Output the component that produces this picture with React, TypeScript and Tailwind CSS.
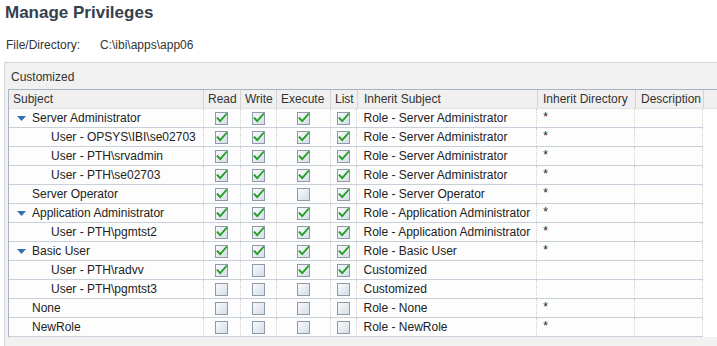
import React from 'react';

type Row = {
  subject: string;
  level: 0 | 1;
  expand?: boolean;
  perms: [boolean, boolean, boolean, boolean];
  inherit: string;
  dir: string;
};

const rows: Row[] = [
  { subject: 'Server Administrator', level: 0, expand: true, perms: [true, true, true, true], inherit: 'Role - Server Administrator', dir: '*' },
  { subject: 'User - OPSYS\\IBI\\se02703', level: 1, perms: [true, true, true, true], inherit: 'Role - Server Administrator', dir: '*' },
  { subject: 'User - PTH\\srvadmin', level: 1, perms: [true, true, true, true], inherit: 'Role - Server Administrator', dir: '*' },
  { subject: 'User - PTH\\se02703', level: 1, perms: [true, true, true, true], inherit: 'Role - Server Administrator', dir: '*' },
  { subject: 'Server Operator', level: 0, perms: [true, true, false, true], inherit: 'Role - Server Operator', dir: '*' },
  { subject: 'Application Administrator', level: 0, expand: true, perms: [true, true, true, true], inherit: 'Role - Application Administrator', dir: '*' },
  { subject: 'User - PTH\\pgmtst2', level: 1, perms: [true, true, true, true], inherit: 'Role - Application Administrator', dir: '*' },
  { subject: 'Basic User', level: 0, expand: true, perms: [true, true, true, true], inherit: 'Role - Basic User', dir: '*' },
  { subject: 'User - PTH\\radvv', level: 1, perms: [true, false, true, true], inherit: 'Customized', dir: '' },
  { subject: 'User - PTH\\pgmtst3', level: 1, perms: [false, false, false, false], inherit: 'Customized', dir: '' },
  { subject: 'None', level: 0, perms: [false, false, false, false], inherit: 'Role - None', dir: '*' },
  { subject: 'NewRole', level: 0, perms: [false, false, false, false], inherit: 'Role - NewRole', dir: '*' },
];

const permCols = ['w-[37px]', 'w-[36px]', 'w-[54px]', 'w-[27px]'];

const CheckBox = ({ checked }: { checked: boolean }) => (
  <svg width="13" height="13" viewBox="0 0 13 13">
    <defs>
      <linearGradient id="cbfill" x1="0" y1="0" x2="1" y2="1">
        <stop offset="0" stopColor="#fbfcfd" />
        <stop offset="1" stopColor="#d3dce6" />
      </linearGradient>
    </defs>
    <rect x="0.5" y="0.5" width="12" height="12" fill="url(#cbfill)" stroke="#8e9aa8" />
    {checked && (
      <path d="M2.5 6.2 L5.2 9.2 L11.3 2.2" fill="none" stroke="#1e9e1e" strokeWidth="1.8" strokeLinecap="square" />
    )}
  </svg>
);

const Triangle = () => (
  <svg width="9" height="5" viewBox="0 0 9 5" className="shrink-0">
    <path d="M0 0 H9 L4.5 5 Z" fill="#2f6fb5" />
  </svg>
);

export default function App() {
  return (
    <div className="w-[717px] h-[346px] overflow-hidden bg-white font-['Liberation_Sans',Arial,sans-serif] text-[12px] text-[#222]">
      <h1 className="pl-[5px] pt-[3px] h-[26px] text-[17px] font-bold text-[#35404d] leading-[20px]">Manage Privileges</h1>
      <div className="flex pl-[6px] mt-[11px] h-[16px] leading-[16px] text-[#333]">
        <span className="w-[94px]">File/Directory:</span>
        <span>C:\ibi\apps\app06</span>
      </div>
      <div className="mt-[9px] ml-[4px] border-t border-l border-[#d6d6d6] bg-[#f1f1f1] h-[300px]">
        <div className="h-[26px] pl-[6px] pt-[7px] leading-[14px] text-[#333]">Customized</div>
        <div className="ml-[3px] border-l border-t border-[#a8b4c2] bg-white">
          <div className="flex h-[19px] leading-[19px] bg-[#f0f0f0] text-[#333] border-b border-[#e4e4e4]">
            <div className="w-[195px] px-[4px] border-r border-[#d4d4d4]">Subject</div>
            <div className="w-[37px] px-[4px] border-r border-[#d4d4d4]">Read</div>
            <div className="w-[36px] px-[4px] border-r border-[#d4d4d4]">Write</div>
            <div className="w-[54px] px-[4px] border-r border-[#d4d4d4]">Execute</div>
            <div className="w-[27px] px-[4px] border-r border-[#d4d4d4]">List</div>
            <div className="w-[180px] px-[6px] border-r border-[#d4d4d4]">Inherit Subject</div>
            <div className="w-[98px] px-[5px] border-r border-[#d4d4d4]">Inherit Directory</div>
            <div className="w-[68px] px-[5px] border-r border-[#d4d4d4]">Description</div>
            <div className="flex-1" />
          </div>
          {rows.map((r) => (
            <div key={r.subject} className="flex h-[19px] leading-[19px]">
              <div className="flex w-[694px] border-b border-[#c9d0da] bg-[#fdfdfd]">
                <div className="w-[195px] flex items-center border-r border-dotted border-[#cfcfcf]">
                  {r.level === 0 ? (
                    <div className="flex items-center pl-[8px] gap-[6px]">
                      {r.expand ? <Triangle /> : <span className="w-[9px]" />}
                      <span>{r.subject}</span>
                    </div>
                  ) : (
                    <span className="pl-[42px]">{r.subject}</span>
                  )}
                </div>
                {r.perms.map((p, i) => (
                  <div key={i} className={`${permCols[i]} flex items-center justify-center border-r border-dotted border-[#cfcfcf]`}>
                    <CheckBox checked={p} />
                  </div>
                ))}
                <div className="w-[180px] px-[6px] border-r border-dotted border-[#cfcfcf]">{r.inherit}</div>
                <div className="w-[98px] px-[6px] pt-[1px] border-r border-dotted border-[#cfcfcf] leading-[14px]">{r.dir}</div>
                <div className="w-[68px] border-r border-dotted border-[#cfcfcf]" />
              </div>
              <div className="flex-1" />
            </div>
          ))}
        </div>
      </div>
    </div>
  );
}
